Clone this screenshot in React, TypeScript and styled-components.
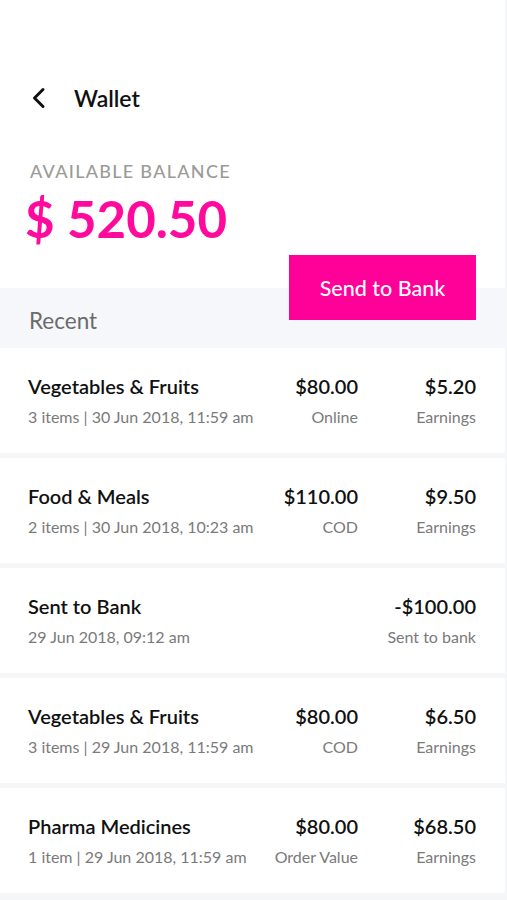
import styled, { createGlobalStyle } from "styled-components";

const GlobalStyle = createGlobalStyle`
  html, body {
    margin: 0;
    padding: 0;
    background: #f5f6f8;
  }
  * {
    box-sizing: border-box;
  }
`;

type Txn = {
  id: number;
  title: string;
  meta: string;
  amount?: string;
  amountLabel?: string;
  value: string;
  valueLabel: string;
};

// Последние операции
const transactions: Txn[] = [
  {
    id: 1,
    title: "Vegetables & Fruits",
    meta: "3 items | 30 Jun 2018, 11:59 am",
    amount: "$80.00",
    amountLabel: "Online",
    value: "$5.20",
    valueLabel: "Earnings",
  },
  {
    id: 2,
    title: "Food & Meals",
    meta: "2 items | 30 Jun 2018, 10:23 am",
    amount: "$110.00",
    amountLabel: "COD",
    value: "$9.50",
    valueLabel: "Earnings",
  },
  {
    id: 3,
    title: "Sent to Bank",
    meta: "29 Jun 2018, 09:12 am",
    value: "-$100.00",
    valueLabel: "Sent to bank",
  },
  {
    id: 4,
    title: "Vegetables & Fruits",
    meta: "3 items | 29 Jun 2018, 11:59 am",
    amount: "$80.00",
    amountLabel: "COD",
    value: "$6.50",
    valueLabel: "Earnings",
  },
  {
    id: 5,
    title: "Pharma Medicines",
    meta: "1 item | 29 Jun 2018, 11:59 am",
    amount: "$80.00",
    amountLabel: "Order Value",
    value: "$68.50",
    valueLabel: "Earnings",
  },
];

const BackIcon = () => (
  <svg width="16" height="22" viewBox="0 0 16 22" fill="none">
    <path
      d="M12 2.5 L3.5 11 L12 19.5"
      stroke="#111"
      strokeWidth="3"
      strokeLinecap="round"
      strokeLinejoin="round"
    />
  </svg>
);

export default function App() {
  return (
    <Root>
      <GlobalStyle />
      <Top>
        <Header>
          <BackButton>
            <BackIcon />
          </BackButton>
          <Title>Wallet</Title>
        </Header>
        <BalanceLabel>AVAILABLE BALANCE</BalanceLabel>
        <Balance>$ 520.50</Balance>
      </Top>
      <RecentBar>
        <RecentText>Recent</RecentText>
        <SendButton>Send to Bank</SendButton>
      </RecentBar>
      <List>
        {transactions.map((t) => (
          <Row key={t.id}>
            <Info>
              <RowTitle>{t.title}</RowTitle>
              <RowMeta>{t.meta}</RowMeta>
            </Info>
            <Amount>
              {t.amount && <RowTitle>{t.amount}</RowTitle>}
              {t.amountLabel && <RowMeta>{t.amountLabel}</RowMeta>}
            </Amount>
            <Earnings>
              <RowTitle>{t.value}</RowTitle>
              <RowMeta>{t.valueLabel}</RowMeta>
            </Earnings>
          </Row>
        ))}
      </List>
    </Root>
  );
}

const Root = styled.div`
  width: calc(100% - 2px);
  min-height: 900px;
  font-family: "Lato", "Liberation Sans", sans-serif;
  color: #111;
`;

const Top = styled.div`
  background: #fff;
  padding: 78px 0 0 0;
  height: 288px;
`;

const Header = styled.div`
  display: flex;
  flex-direction: row;
  align-items: center;
  height: 40px;
  padding-left: 31px;
`;

const BackButton = styled.div`
  width: 43px;
  display: flex;
  align-items: center;
`;

const Title = styled.div`
  font-size: 23px;
  font-weight: 600;
  color: #111;
`;

const BalanceLabel = styled.div`
  margin-top: 42px;
  padding-left: 30px;
  font-size: 18px;
  font-weight: 500;
  letter-spacing: 1.3px;
  color: #9b9b98;
  line-height: 22px;
`;

const Balance = styled.div`
  margin-top: 10px;
  padding-left: 25px;
  font-size: 51px;
  font-weight: 700;
  color: #ff0a9d;
  line-height: 54px;
`;

const RecentBar = styled.div`
  position: relative;
  height: 60px;
  background: #f5f7fa;
  display: flex;
  align-items: center;
  padding-left: 29px;
`;

const RecentText = styled.div`
  font-size: 22.5px;
  color: #6b6b6b;
  margin-top: 4px;
`;

const SendButton = styled.button`
  position: absolute;
  right: 29px;
  top: -33px;
  width: 187px;
  height: 65px;
  border: none;
  background: #ff0099;
  color: #fff;
  font-family: inherit;
  font-size: 21.5px;
  font-weight: 500;
  cursor: pointer;
`;

const List = styled.div`
  display: flex;
  flex-direction: column;
  row-gap: 5px;
`;

const Row = styled.div`
  background: #fff;
  height: 105px;
  display: flex;
  flex-direction: row;
  align-items: center;
  padding: 0 29px 0 28px;
`;

const Info = styled.div`
  flex: 1;
  min-width: 0;
  display: flex;
  flex-direction: column;
  row-gap: 10px;
  white-space: nowrap;
`;

const Amount = styled.div`
  flex: 0 0 110px;
  display: flex;
  flex-direction: column;
  align-items: flex-end;
  row-gap: 10px;
  white-space: nowrap;
`;

const Earnings = styled.div`
  flex: 0 0 118px;
  display: flex;
  flex-direction: column;
  align-items: flex-end;
  row-gap: 10px;
  white-space: nowrap;
`;

const RowTitle = styled.div`
  font-size: 20px;
  font-weight: 600;
  color: #111;
  line-height: 22px;
`;

const RowMeta = styled.div`
  font-size: 16px;
  color: #7a7a7a;
  line-height: 20px;
`;
